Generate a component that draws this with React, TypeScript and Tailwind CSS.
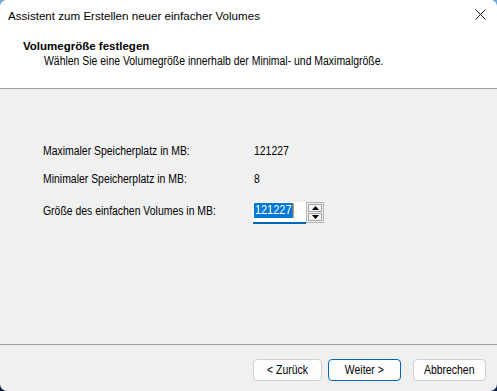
import React from "react";

const base = "font-['Liberation_Sans',Arial,sans-serif] text-[12.5px] leading-[15px] text-black";

function N({ children, center }: { children: React.ReactNode; center?: boolean }) {
  return (
    <span className={`inline-block whitespace-nowrap scale-x-[0.835] ${center ? "origin-center" : "origin-left"}`}>
      {children}
    </span>
  );
}

function Arrow({ up }: { up?: boolean }) {
  return (
    <svg width="7" height="4" viewBox="0 0 7 4" className="block">
      {up ? <polygon points="0,4 7,4 3.5,0" fill="#000" /> : <polygon points="0,0 7,0 3.5,4" fill="#000" />}
    </svg>
  );
}

export default function App() {
  return (
    <div className="w-[497px] h-[391px] bg-gradient-to-b from-[#6fa8dc] via-[#3a6aa8] to-[#0a1a3f]">
      <div className="w-full h-full rounded-[7px] overflow-hidden flex flex-col bg-[#f0f0f0]">
        {/* Title bar */}
        <div className="h-[31px] bg-white flex items-center justify-between pl-[8px] pr-[11px]">
          <span className="font-['Liberation_Sans',Arial,sans-serif] text-[11.6px] leading-[16px] text-black">
            Assistent zum Erstellen neuer einfacher Volumes
          </span>
          <svg width="11" height="11" viewBox="0 0 11 11" className="block mt-[-2px]">
            <path d="M0.5 0.5 L10.5 10.5 M10.5 0.5 L0.5 10.5" stroke="#111" strokeWidth="1" />
          </svg>
        </div>
        {/* Header */}
        <div className="h-[57px] bg-white pt-[8px]">
          <div className="pl-[23px] font-['Liberation_Sans',Arial,sans-serif] font-bold text-[11.5px] leading-[15px] text-black">
            Volumegröße festlegen
          </div>
          <div className={`pl-[44px] ${base}`}>
            <N>Wählen Sie eine Volumegröße innerhalb der Minimal- und Maximalgröße.</N>
          </div>
        </div>
        <div className="h-px bg-[#a0a0a0]" />
        {/* Body */}
        <div className={`flex-1 pt-[55px] pl-[43px] ${base}`}>
          <div className="flex h-[15px]">
            <span className="w-[211px]"><N>Maximaler Speicherplatz in MB:</N></span>
            <span><N>121227</N></span>
          </div>
          <div className="flex h-[15px] mt-[13px]">
            <span className="w-[211px]"><N>Minimaler Speicherplatz in MB:</N></span>
            <span><N>8</N></span>
          </div>
          <div className="flex h-[22px] mt-[15px]">
            <span className="w-[210px] pt-[1.5px]"><N>Größe des einfachen Volumes in MB:</N></span>
            <div className="w-[53px] h-[22px] bg-white border-b-2 border-[#0067c0] pl-[1px] pt-[1px]">
              <span className="inline-block whitespace-nowrap origin-left scale-x-[0.88] bg-[#0078d7] text-white h-[15px] border-r border-[#f7941d] px-[1px]">121227</span>
            </div>
            <div className="w-[18px] h-[21px] border border-[#b4b4b4] bg-[#f0f0f0] flex flex-col gap-px p-px">
              <div className="flex-1 border border-[#a6a6a6] bg-[#f4f4f4] flex items-center justify-center">
                <Arrow up />
              </div>
              <div className="flex-1 border border-[#a6a6a6] bg-[#f4f4f4] flex items-center justify-center">
                <Arrow />
              </div>
            </div>
          </div>
        </div>
        <div className="h-px bg-[#a0a0a0]" />
        {/* Footer */}
        <div className="h-[46px] flex justify-end items-start pt-[14px] pr-[11px]">
          <button className={`w-[69px] h-[22px] rounded-[4px] border border-[#d0d0d0] bg-[#fdfdfd] flex items-center justify-center ${base}`}>
            <N center>&lt; Zurück</N>
          </button>
          <button className={`ml-[6px] w-[73px] h-[22px] rounded-[4px] border border-[#0067c0] bg-[#fdfdfd] flex items-center justify-center ${base}`}>
            <N center>Weiter &gt;</N>
          </button>
          <button className={`ml-[12px] w-[73px] h-[22px] rounded-[4px] border border-[#d0d0d0] bg-[#fdfdfd] flex items-center justify-center ${base}`}>
            <N center>Abbrechen</N>
          </button>
        </div>
      </div>
    </div>
  );
}
